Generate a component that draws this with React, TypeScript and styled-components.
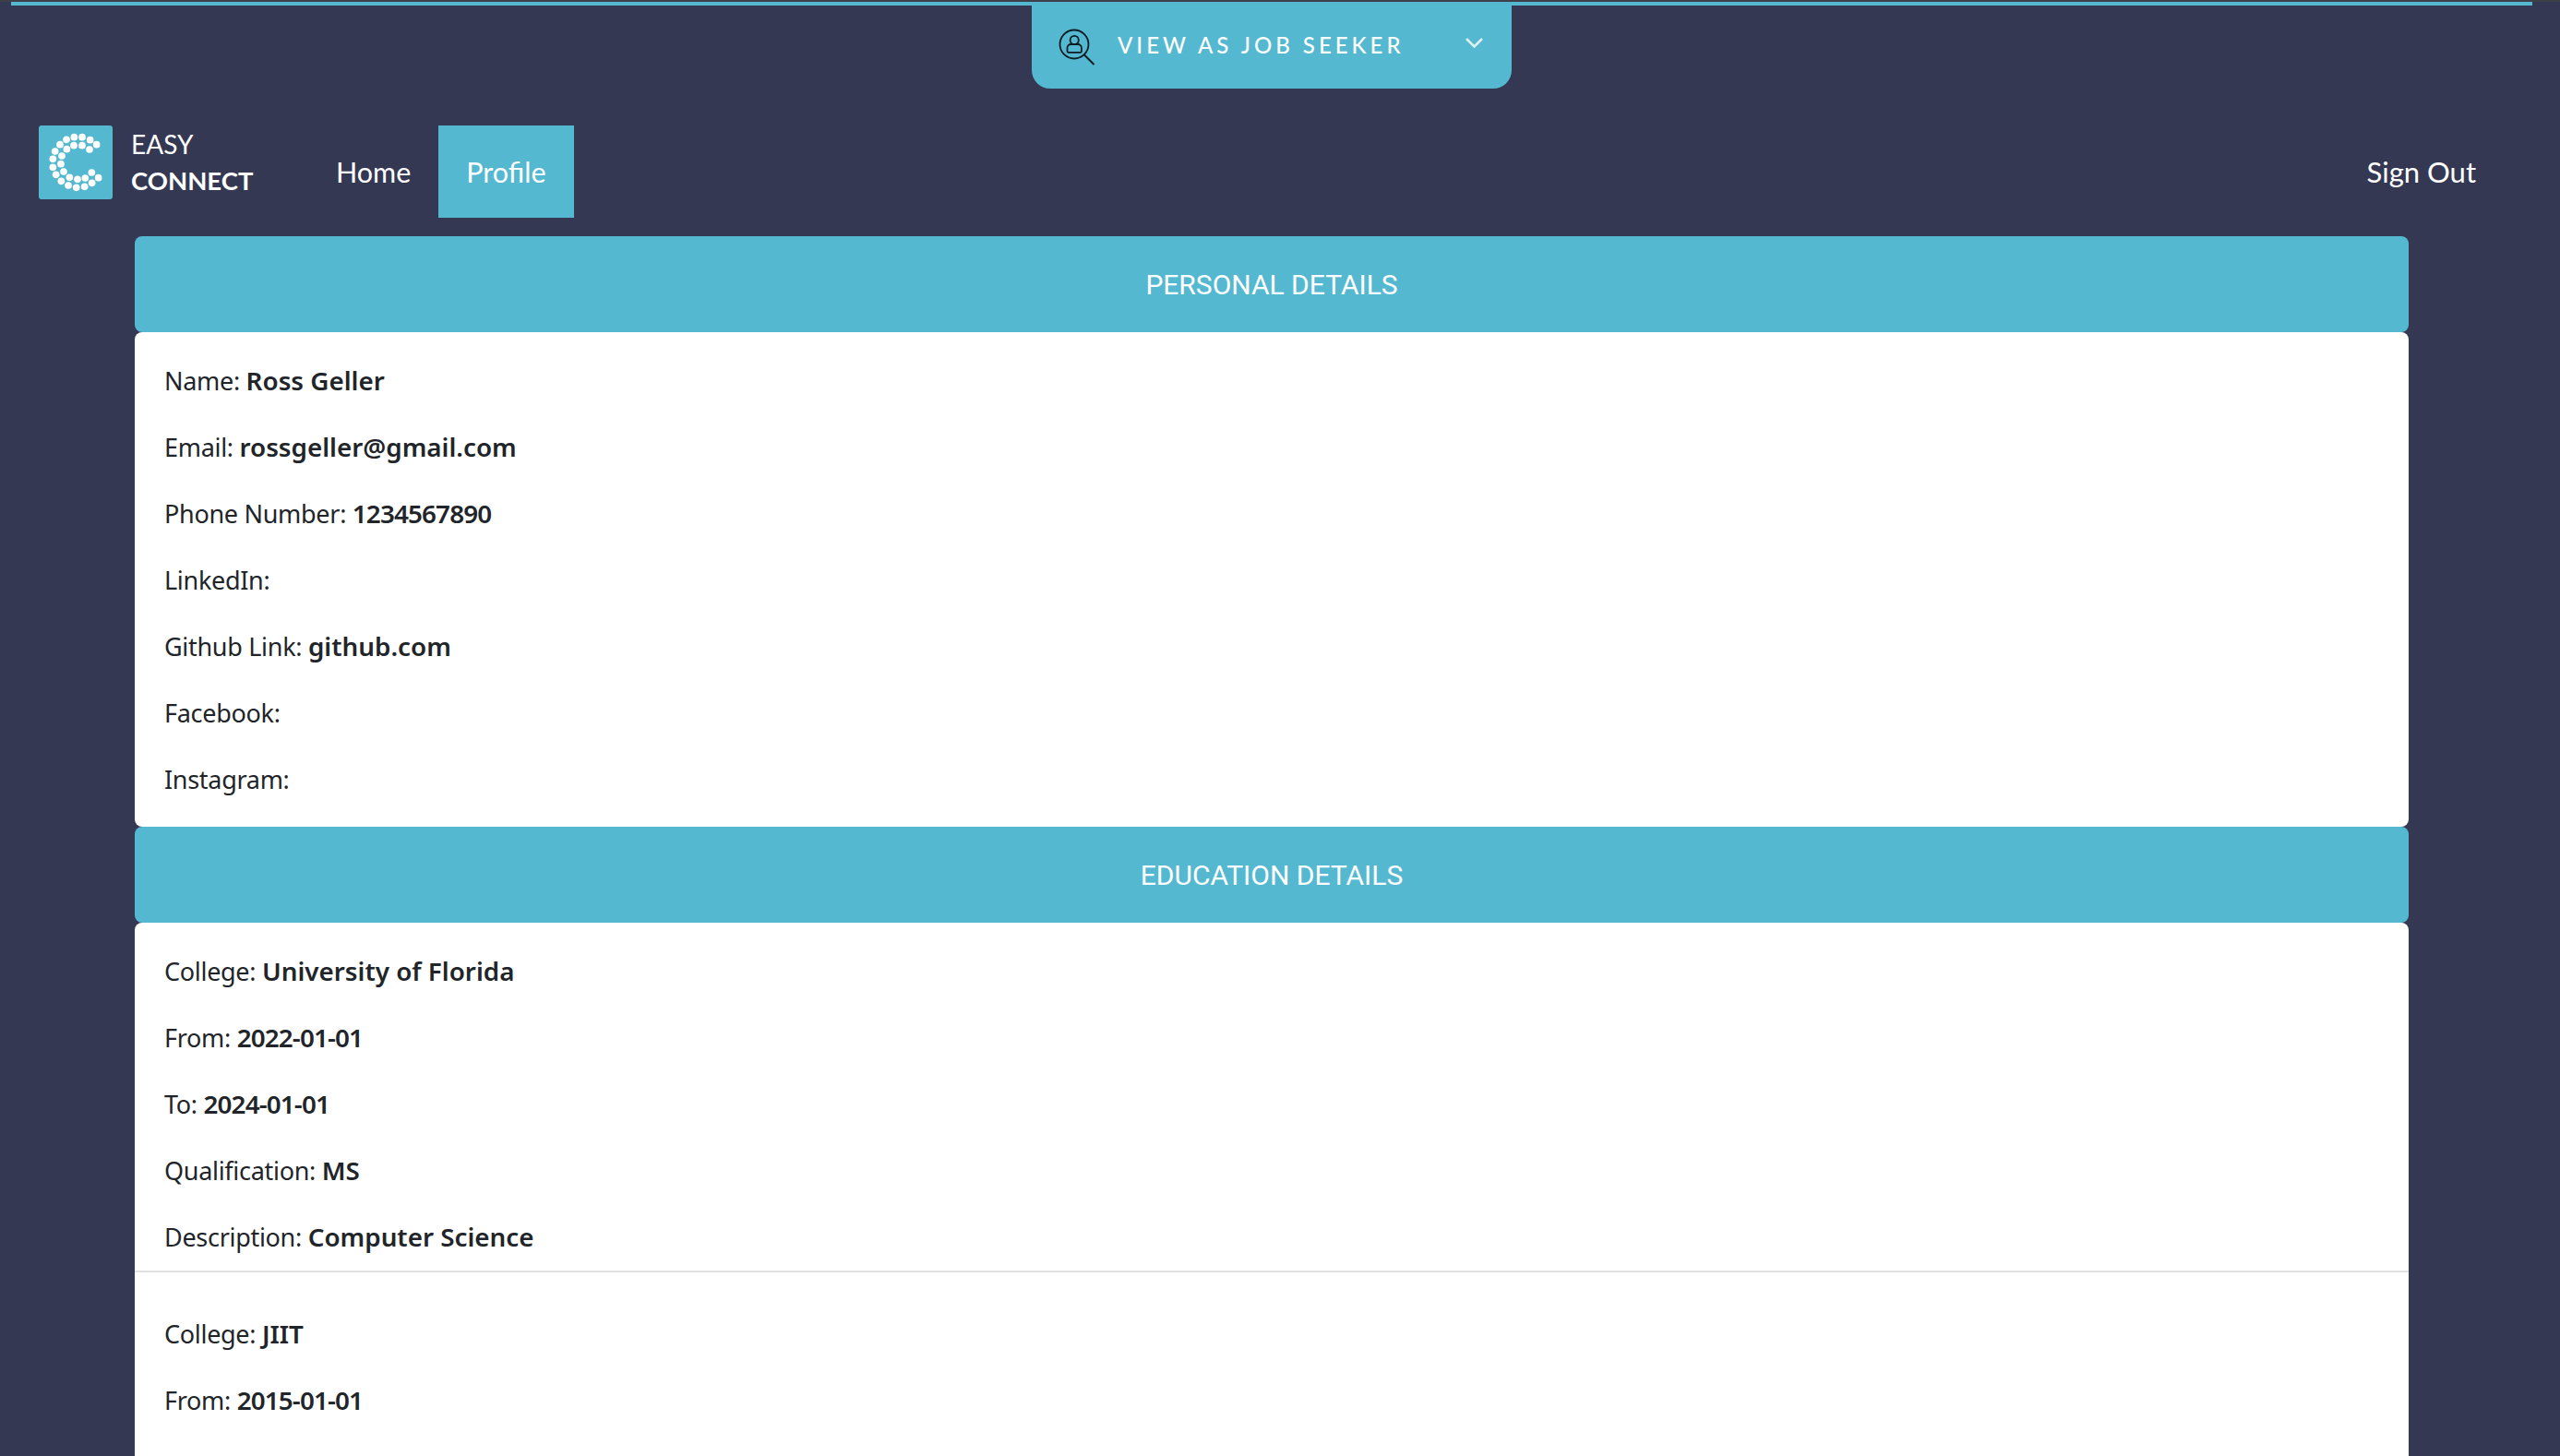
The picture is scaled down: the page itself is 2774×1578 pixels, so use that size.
import React from "react";
import styled, { createGlobalStyle } from "styled-components";

const Global = createGlobalStyle`
  html, body { margin: 0; padding: 0; background: #343852; }
  body { font-family: Lato, "Noto Sans", sans-serif; }
`;

const Page = styled.div`
  height: 100vh;
  overflow: hidden;
  box-sizing: border-box;
  background: #343852;
  border-top: 2px solid #3d4048;
  display: flex;
  flex-direction: column;
`;

const TopLine = styled.div`
  height: 4px;
  margin: 0 30px 0 12px;
  background: #55b8d1;
  flex: none;
`;

const BannerRow = styled.div`
  display: flex;
  justify-content: center;
  flex: none;
`;

const Banner = styled.div`
  width: 520px;
  height: 90px;
  margin-right: 18px;
  background: #55b8d1;
  border-radius: 0 0 20px 20px;
  display: flex;
  align-items: center;
  padding: 0 30px 0 29px;
  box-sizing: border-box;
  color: #fff;
`;

const BannerLabel = styled.span`
  margin: 0 0 6px 24px;
  font-size: 24px;
  font-weight: 500;
  letter-spacing: 4px;
  flex: 1;
  white-space: nowrap;
`;

const Nav = styled.nav`
  display: flex;
  align-items: center;
  height: 100px;
  margin-top: 40px;
  padding: 0 91px 0 42px;
  flex: none;
  color: #fff;
`;

const LogoBox = styled.div`
  width: 80px;
  height: 80px;
  background: #55b8d1;
  border-radius: 3px;
  align-self: flex-start;
  flex: none;
`;

const Brand = styled.div`
  margin-left: 20px;
  font-size: 28px;
  line-height: 40px;
  align-self: flex-start;
  width: 192px;
  strong { display: block; font-weight: 700; font-size: 27.5px; }
`;

const NavLink = styled.a<{ $active?: boolean }>`
  height: 100px;
  padding: 0 30px;
  display: flex;
  align-items: center;
  font-size: 30.5px;
  background: ${(p) => (p.$active ? "#55b8d1" : "transparent")};
`;

const SignOut = styled.a`
  margin-left: auto;
  font-size: 31px;
`;

const Main = styled.main`
  margin: 20px 164px 0 146px;
`;

const CardHeader = styled.div`
  height: 104px;
  background: #55b8d1;
  border-radius: 8px;
  display: flex;
  align-items: center;
  justify-content: center;
  font-family: Roboto, sans-serif;
  font-size: 30px;
  color: #fff;
  text-transform: uppercase;
`;

const CardBody = styled.div`
  background: #fff;
  border-radius: 8px;
  color: #212529;
`;

const Group = styled.div`
  display: flow-root;
  padding: 32px 32px 0;
`;

const DividedGroup = styled(Group)`
  border-bottom: 2px solid #e0e0e0;
  & > p:last-child { margin-bottom: 15px; }
`;

const TailGroup = styled(Group)`
  padding: 46px 32px 100px;
`;

const Row = styled.p`
  margin: 0 0 30px;
  font-family: "Noto Sans", sans-serif;
  font-size: 27px;
  letter-spacing: -0.3px;
  line-height: 42px;
  white-space: nowrap;
`;

const Value = styled.strong<{ $numeric?: boolean }>`
  font-weight: 600;
  font-size: 27.8px;
  line-height: 1;
  letter-spacing: ${(p) => (p.$numeric ? "-0.85px" : "0")};
`;

const Field = ({ label, value, numeric }: { label: string; value?: string; numeric?: boolean }) => (
  <Row>
    {label}: {value && <Value $numeric={numeric}>{value}</Value>}
  </Row>
);

const logoDots: [number, number][] = [
  [151, 71], [177, 71], [203, 80], [224, 95], [126, 79], [105, 95], [89, 117], [82, 142],
  [82, 169], [92, 193], [109, 214], [132, 228], [158, 235], [185, 232], [209, 220], [230, 203],
  [150, 98], [177, 98], [201, 111], [127, 110], [111, 132], [108, 158], [117, 183], [136, 202],
  [162, 208], [187, 204], [208, 186],
];

const Logo = () => (
  <LogoBox>
    <svg width="80" height="80" viewBox="36 33 240 240" aria-hidden="true">
      {logoDots.map(([x, y]) => (
        <circle key={`${x}-${y}`} cx={x} cy={y} r="11.5" fill="#fff" />
      ))}
    </svg>
  </LogoBox>
);

const IconSvg = styled.svg`
  flex: none;
`;

const ChevronSvg = styled.svg`
  flex: none;
  margin-bottom: 10px;
`;

const SeekerIcon = () => (
  <IconSvg width="40" height="40" viewBox="0 0 40 40" fill="none" stroke="#0d1b22" strokeWidth="1.8" aria-hidden="true">
    <circle cx="17" cy="17" r="15.5" />
    <path d="M27.5 28 L38.5 39" strokeWidth="2" />
    <circle cx="17.2" cy="12.5" r="4.6" />
    <path d="M9.5 24.6 v-3.6 a4 4 0 0 1 4-4 h7.4 a4 4 0 0 1 4 4 v3.6 a1.2 1.2 0 0 1 -1.2 1.2 H10.7 a1.2 1.2 0 0 1 -1.2 -1.2 z" />
  </IconSvg>
);

const Chevron = () => (
  <ChevronSvg width="21" height="13" viewBox="0 0 21 13" fill="none" stroke="#fff" strokeWidth="2.6" opacity="0.8" aria-hidden="true">
    <path d="M2 2 L10.5 10.5 L19 2" />
  </ChevronSvg>
);

export default function App() {
  return (
    <Page>
      <Global />
      <TopLine />
      <BannerRow>
        <Banner>
          <SeekerIcon />
          <BannerLabel>VIEW AS JOB SEEKER</BannerLabel>
          <Chevron />
        </Banner>
      </BannerRow>
      <Nav>
        <Logo />
        <Brand>
          EASY
          <strong>CONNECT</strong>
        </Brand>
        <NavLink>Home</NavLink>
        <NavLink $active>Profile</NavLink>
        <SignOut>Sign Out</SignOut>
      </Nav>
      <Main>
        <CardHeader>Personal Details</CardHeader>
        <CardBody>
          <Group>
            <Field label="Name" value="Ross Geller" />
            <Field label="Email" value="rossgeller@gmail.com" />
            <Field label="Phone Number" value="1234567890" numeric />
            <Field label="LinkedIn" />
            <Field label="Github Link" value="github.com" />
            <Field label="Facebook" />
            <Field label="Instagram" />
          </Group>
        </CardBody>
        <CardHeader>Education Details</CardHeader>
        <CardBody>
          <DividedGroup>
            <Field label="College" value="University of Florida" />
            <Field label="From" value="2022-01-01" numeric />
            <Field label="To" value="2024-01-01" numeric />
            <Field label="Qualification" value="MS" />
            <Field label="Description" value="Computer Science" />
          </DividedGroup>
          <TailGroup>
            <Field label="College" value="JIIT" />
            <Field label="From" value="2015-01-01" numeric />
          </TailGroup>
        </CardBody>
      </Main>
    </Page>
  );
}
